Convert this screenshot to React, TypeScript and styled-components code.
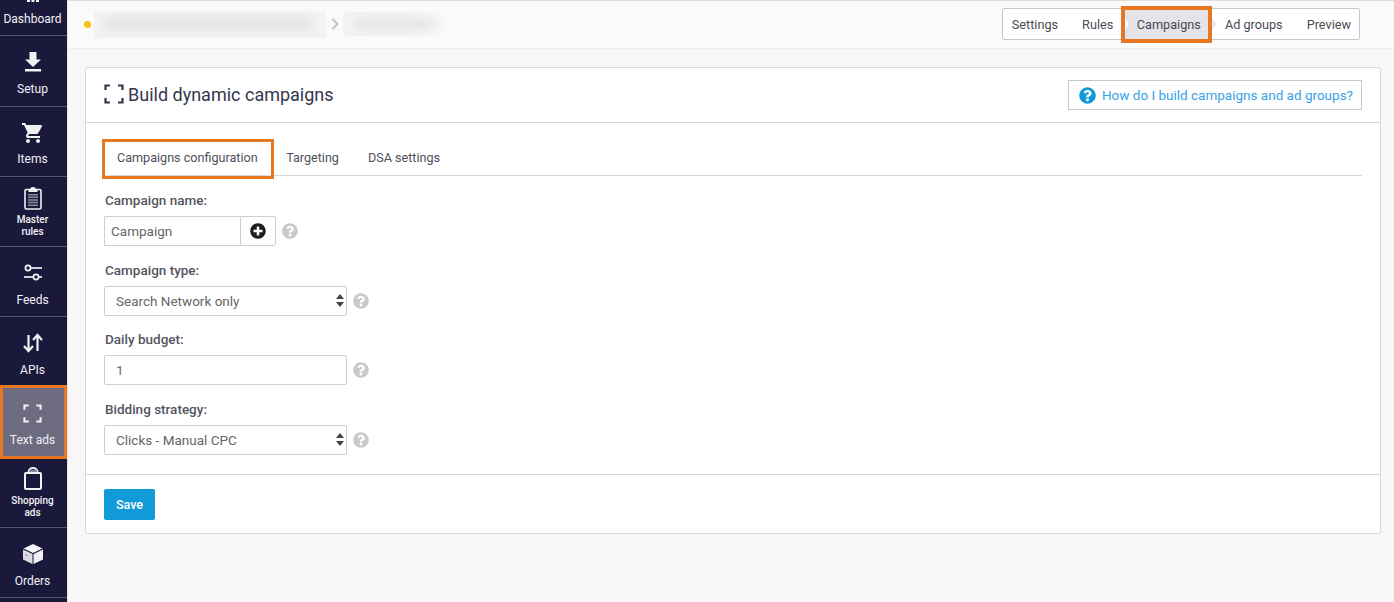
import React from 'react';
import styled, { createGlobalStyle } from 'styled-components';
import { FaQuestionCircle, FaPlusCircle } from 'react-icons/fa';
import { MdShoppingCart } from 'react-icons/md';

const GlobalStyle = createGlobalStyle`
  html, body {
    margin: 0;
    padding: 0;
    height: 602px;
    overflow: hidden;
    background: #f7f7f7;
    font-family: Roboto, Arial, sans-serif;
  }
  * { box-sizing: border-box; }
`;

const Page = styled.div`
  display: flex;
  width: 1394px;
  height: 602px;
  overflow: hidden;
`;

const Sidebar = styled.nav`
  width: 68px;
  flex: none;
  height: 602px;
  overflow: hidden;
  background: #1b193b;
  border-right: 1px solid #e4e4e4;
`;

const SideList = styled.div`
  margin-top: -34px;
`;

const SideItem = styled.a<{ $active?: boolean; $small?: boolean }>`
  position: relative;
  display: flex;
  flex-direction: column;
  align-items: center;
  height: 70.25px;
  padding: ${p => (p.$small ? '9px' : '14px')} 2px 0 0;
  color: #f1f1f4;
  border-bottom: 1px solid #55546e;
  background: ${p => (p.$active ? '#6d6c80' : 'transparent')};
  ${p =>
    p.$active &&
    `
    &::after {
      content: '';
      position: absolute;
      top: -3px;
      right: 0;
      bottom: -2px;
      left: 0;
      border: 3px solid #e87722;
    }
  `}
`;

const SideIcon = styled.span`
  display: flex;
  align-items: center;
  justify-content: center;
  width: 24px;
  height: 24px;
`;

const SideLabel = styled.span<{ $small?: boolean }>`
  max-width: ${p => (p.$small ? '48px' : 'none')};
  margin-top: ${p => (p.$small ? '4px' : '7.6px')};
  font-size: ${p => (p.$small ? '10px' : '12px')};
  line-height: ${p => (p.$small ? '12.5px' : '14px')};
  font-weight: ${p => (p.$small ? 500 : 400)};
  text-align: center;
`;

const Main = styled.main`
  flex: 1;
  min-width: 0;
`;

const TopBar = styled.header`
  display: flex;
  align-items: center;
  justify-content: space-between;
  height: 49px;
  padding: 0 34px 1px 16px;
  border-top: 1px solid #dedede;
  border-bottom: 1px solid #ececec;
  background: #fafafa;
`;

const Crumbs = styled.div`
  display: flex;
  align-items: center;
`;

const Dot = styled.span`
  width: 7px;
  height: 7px;
  border-radius: 50%;
  background: #f5c211;
  margin-right: 3px;
`;

const BlurBlock = styled.div<{ $w: number; $h: number; $fade?: boolean }>`
  width: ${p => p.$w}px;
  height: ${p => p.$h}px;
  padding: 7px ${p => (p.$fade ? '12px' : '14px')} 7px 12px;
  overflow: hidden;
  background: ${p => (p.$fade ? 'linear-gradient(90deg, #f3f3f3 60%, #fafafa)' : '#f3f3f3')};
`;

const BlurStreak = styled.div`
  height: 100%;
  background: #e3e3e5;
  filter: blur(5px);
`;

const Chevron = styled.svg`
  width: 8px;
  height: 12px;
  margin: 0 4px 0 5px;
`;

const Steps = styled.div`
  display: flex;
  align-items: stretch;
  height: 32px;
  border: 1px solid #c5c5cc;
  border-radius: 2px;
  background: #fff;
`;

const Step = styled.a<{ $active?: boolean; $pl: number; $pr: number }>`
  position: relative;
  display: flex;
  align-items: center;
  padding: 0 ${p => p.$pr}px 0 ${p => p.$pl}px;
  font-size: 12.7px;
  color: #4a4a55;
  ${p =>
    p.$active &&
    `
    height: 29px;
    align-self: center;
    background: #e3e3e8;
    outline: 4px solid #e87722;
    z-index: 1;
    &::before {
      content: '';
      position: absolute;
      left: 0;
      top: 8px;
      border-left: 4px solid #fff;
      border-top: 6px solid transparent;
      border-bottom: 6px solid transparent;
    }
    &::after {
      content: '';
      position: absolute;
      left: calc(100% + 4px);
      top: 8px;
      border-left: 4px solid #e9e9ed;
      border-top: 6px solid transparent;
      border-bottom: 6px solid transparent;
    }
  `}
`;

const Content = styled.div`
  padding: 18px 13px 0 17px;
`;

const Card = styled.section`
  height: 467px;
  background: #fff;
  border: 1px solid #d8d8d8;
  border-radius: 3px;
`;

const CardHead = styled.div`
  display: flex;
  align-items: center;
  justify-content: space-between;
  height: 55px;
  padding: 0 18px;
  border-bottom: 1px solid #d8d8d8;
`;

const CardTitle = styled.h1`
  display: flex;
  align-items: center;
  gap: 4px;
  margin: 0 0 2px;
  font-size: 18px;
  font-weight: 400;
  color: #35364f;
`;

const HelpLink = styled.a`
  display: flex;
  align-items: center;
  gap: 6px;
  height: 30px;
  padding: 0 8px 0 10px;
  border: 1px solid #c5c5cc;
  font-size: 13.5px;
  color: #37a3e6;
  svg { color: #119ad8; }
`;

const CardBody = styled.div`
  height: 352px;
  padding: 16px 18px 0;
  border-bottom: 1px solid #d8d8d8;
`;

const Tabs = styled.div`
  display: flex;
  align-items: stretch;
  height: 37px;
  margin-bottom: 16px;
  border-bottom: 1px solid #d8d8d8;
`;

const Tab = styled.a<{ $active?: boolean }>`
  display: flex;
  align-items: center;
  padding: 0 14.5px;
  font-size: 12.6px;
  color: #4f4f5c;
  ${p =>
    p.$active &&
    `
    margin: 3px 1px 0;
    padding: 0 13px 4px 12px;
    height: 34px;
    outline: 3px solid #e87722;
  `}
`;

const Field = styled.div`
  margin-bottom: 15.5px;
`;

const Label = styled.label`
  display: block;
  height: 17px;
  margin-bottom: 7px;
  padding-left: 1px;
  font-size: 13.5px;
  line-height: 17px;
  font-weight: 500;
  color: #55555f;
`;

const Row = styled.div`
  display: flex;
  align-items: center;
  height: 30px;
`;

const TextInput = styled.input<{ $w: number }>`
  width: ${p => p.$w}px;
  height: 30px;
  padding: 0 11px;
  border: 1px solid #cfcfcf;
  border-radius: 2px;
  font-family: inherit;
  font-size: 13.5px;
  color: #666;
  background: #fff;
`;

const NameInput = styled(TextInput)`
  padding: 0 6px;
  border-right: none;
  border-radius: 2px 0 0 2px;
`;

const AddButton = styled.span`
  display: flex;
  align-items: center;
  justify-content: center;
  width: 36px;
  height: 30px;
  border: 1px solid #cfcfcf;
  border-radius: 0 2px 2px 0;
  color: #1d1d22;
`;

const SelectWrap = styled.div`
  position: relative;
  width: 243px;
  height: 30px;
`;

const Select = styled.select`
  appearance: none;
  width: 100%;
  height: 100%;
  padding: 0 11px;
  border: 1px solid #cfcfcf;
  border-radius: 2px;
  font-family: inherit;
  font-size: 13.5px;
  color: #666;
  background: #fff;
`;

const Carets = styled.svg`
  position: absolute;
  top: 8px;
  right: 3px;
  width: 8px;
  height: 13px;
  pointer-events: none;
`;

const Hint = styled.span`
  display: flex;
  margin-left: 6px;
  color: #c9c9c9;
`;

const CardFoot = styled.div`
  padding: 14px 18px;
`;

const SaveButton = styled.button`
  width: 51px;
  height: 31px;
  padding: 0;
  border: none;
  border-radius: 2px;
  background: #119ad8;
  color: #fff;
  font-family: inherit;
  font-size: 12.5px;
  font-weight: 500;
`;

const DashboardIcon = () => (
  <svg width="20" height="24" viewBox="0 0 20 24" fill="#f1f1f4">
    <rect x="4" y="12" width="3" height="10" />
    <rect x="8.500" y="12" width="3" height="10" />
    <rect x="13" y="12" width="3" height="10" />
  </svg>
);

const DownloadIcon = () => (
  <svg width="20" height="22" viewBox="0 0 20 22" fill="#f1f1f4">
    <path d="M6.500 1h7v7.500H18L10 16 2 8.500h4.500z" />
    <rect x="2" y="18" width="16" height="2.500" />
  </svg>
);

const ClipboardIcon = () => (
  <svg width="20" height="24" viewBox="0 0 20 24">
    <rect x="2" y="3.500" width="16" height="19.500" rx="1.500" fill="none" stroke="#f1f1f4" strokeWidth="1.600" />
    <path d="M7 3.500C7 2 8 1 10 1s3 1 3 2.500h1.500V6h-9V3.500z" fill="#f1f1f4" />
    <path d="M5 8h10v1.500H5zm0 2.600h10v1.500H5zm0 2.600h10v1.500H5zm0 2.600h10v1.500H5zm0 2.600h10V20H5z" fill="#8d8c9e" />
  </svg>
);

const SlidersIcon = () => (
  <svg width="20" height="20" viewBox="0 0 20 20" fill="none" stroke="#f1f1f4" strokeWidth="1.700">
    <circle cx="5" cy="5" r="2.600" />
    <path d="M7.600 5H19" />
    <path d="M1 14h9.400" />
    <circle cx="13" cy="14" r="2.600" />
    <path d="M15.600 14H19" />
  </svg>
);

const ArrowsIcon = () => (
  <svg width="22" height="22" viewBox="0 0 22 22" fill="none" stroke="#f1f1f4" strokeWidth="2.200">
    <path d="M6.500 3v15.500M2 14l4.500 5 4.500-5" />
    <path d="M15.500 19V3.500M11 8l4.500-5L20 8" />
  </svg>
);

const CornersIcon = ({ size, color }: { size: number; color: string }) => (
  <svg width={size} height={size} viewBox="0 0 20 20" fill="none" stroke={color} strokeWidth="2.200">
    <path d="M1.500 6V1.500H6M14 1.500h4.500V6M18.500 14v4.500H14M6 18.500H1.500V14" />
  </svg>
);

const BagIcon = () => (
  <svg width="20" height="24" viewBox="0 0 20 24" fill="none" stroke="#f1f1f4">
    <rect x="2" y="6" width="16" height="16" rx="1" strokeWidth="2" />
    <path d="M5.500 6V5a4.500 4 0 0 1 9 0v1" strokeWidth="2" />
    <rect x="6" y="3" width="8" height="2" fill="#8d8c9e" stroke="none" />
  </svg>
);

const CubeIcon = () => (
  <svg width="22" height="22" viewBox="0 0 22 22">
    <path d="M11 1l9.500 4.500L11 10 1.500 5.500z" fill="#f6f6f8" />
    <path d="M1 6.500l9.500 4.500v10L1 16.500z" fill="#dcdce2" />
    <path d="M21 6.500L11.500 11v10l9.500-4.500z" fill="#f0f0f3" />
    <path d="M3 11.500l3 1.400" stroke="#8d8c9e" strokeWidth="1" />
  </svg>
);

const sideItems = [
  { label: 'Dashboard', icon: <DashboardIcon /> },
  { label: 'Setup', icon: <DownloadIcon /> },
  { label: 'Items', icon: <MdShoppingCart size={24} /> },
  { label: 'Master rules', small: true, icon: <ClipboardIcon /> },
  { label: 'Feeds', icon: <SlidersIcon /> },
  { label: 'APIs', icon: <ArrowsIcon /> },
  { label: 'Text ads', active: true, icon: <CornersIcon size={19} color="#f1f1f4" /> },
  { label: 'Shopping ads', small: true, icon: <BagIcon /> },
  { label: 'Orders', icon: <CubeIcon /> },
];

const steps = [
  { label: 'Settings', pl: 9, pr: 11.5 },
  { label: 'Rules', pl: 12.5, pr: 11.5 },
  { label: 'Campaigns', pl: 12, pr: 7, active: true },
  { label: 'Ad groups', pl: 17, pr: 12 },
  { label: 'Preview', pl: 12, pr: 8 },
];

const HintIcon = () => (
  <Hint>
    <FaQuestionCircle size={16} />
  </Hint>
);

const CaretIcon = () => (
  <Carets viewBox="0 0 8 13" fill="#444">
    <path d="M4 0l4 5H0zM4 13L0 8h8z" />
  </Carets>
);

const App: React.FC = () => {
  return (
    <Page>
      <GlobalStyle />
      <Sidebar>
        <SideList>
          {sideItems.map(item => (
            <SideItem key={item.label} $active={item.active} $small={item.small}>
              <SideIcon>{item.icon}</SideIcon>
              <SideLabel $small={item.small}>{item.label}</SideLabel>
            </SideItem>
          ))}
        </SideList>
      </Sidebar>
      <Main>
        <TopBar>
          <Crumbs>
            <Dot />
            <BlurBlock $w={232} $h={27}>
              <BlurStreak />
            </BlurBlock>
            <Chevron viewBox="0 0 8 12" fill="none" stroke="#c4c4c4" strokeWidth="2">
              <path d="M1.500 1l5 5-5 5" />
            </Chevron>
            <BlurBlock $w={105} $h={24} $fade>
              <BlurStreak />
            </BlurBlock>
          </Crumbs>
          <Steps>
            {steps.map(step => (
              <Step key={step.label} $active={step.active} $pl={step.pl} $pr={step.pr}>
                {step.label}
              </Step>
            ))}
          </Steps>
        </TopBar>
        <Content>
          <Card>
            <CardHead>
              <CardTitle>
                <CornersIcon size={20} color="#35364f" />
                Build dynamic campaigns
              </CardTitle>
              <HelpLink>
                <FaQuestionCircle size={17} />
                How do I build campaigns and ad groups?
              </HelpLink>
            </CardHead>
            <CardBody>
              <Tabs>
                <Tab $active>Campaigns configuration</Tab>
                <Tab>Targeting</Tab>
                <Tab>DSA settings</Tab>
              </Tabs>
              <Field>
                <Label>Campaign name:</Label>
                <Row>
                  <NameInput $w={136} defaultValue="Campaign" />
                  <AddButton>
                    <FaPlusCircle size={16} />
                  </AddButton>
                  <HintIcon />
                </Row>
              </Field>
              <Field>
                <Label>Campaign type:</Label>
                <Row>
                  <SelectWrap>
                    <Select defaultValue="search">
                      <option value="search">Search Network only</option>
                    </Select>
                    <CaretIcon />
                  </SelectWrap>
                  <HintIcon />
                </Row>
              </Field>
              <Field>
                <Label>Daily budget:</Label>
                <Row>
                  <TextInput $w={243} defaultValue="1" />
                  <HintIcon />
                </Row>
              </Field>
              <Field>
                <Label>Bidding strategy:</Label>
                <Row>
                  <SelectWrap>
                    <Select defaultValue="cpc">
                      <option value="cpc">Clicks - Manual CPC</option>
                    </Select>
                    <CaretIcon />
                  </SelectWrap>
                  <HintIcon />
                </Row>
              </Field>
            </CardBody>
            <CardFoot>
              <SaveButton>Save</SaveButton>
            </CardFoot>
          </Card>
        </Content>
      </Main>
    </Page>
  );
};

export default App;
